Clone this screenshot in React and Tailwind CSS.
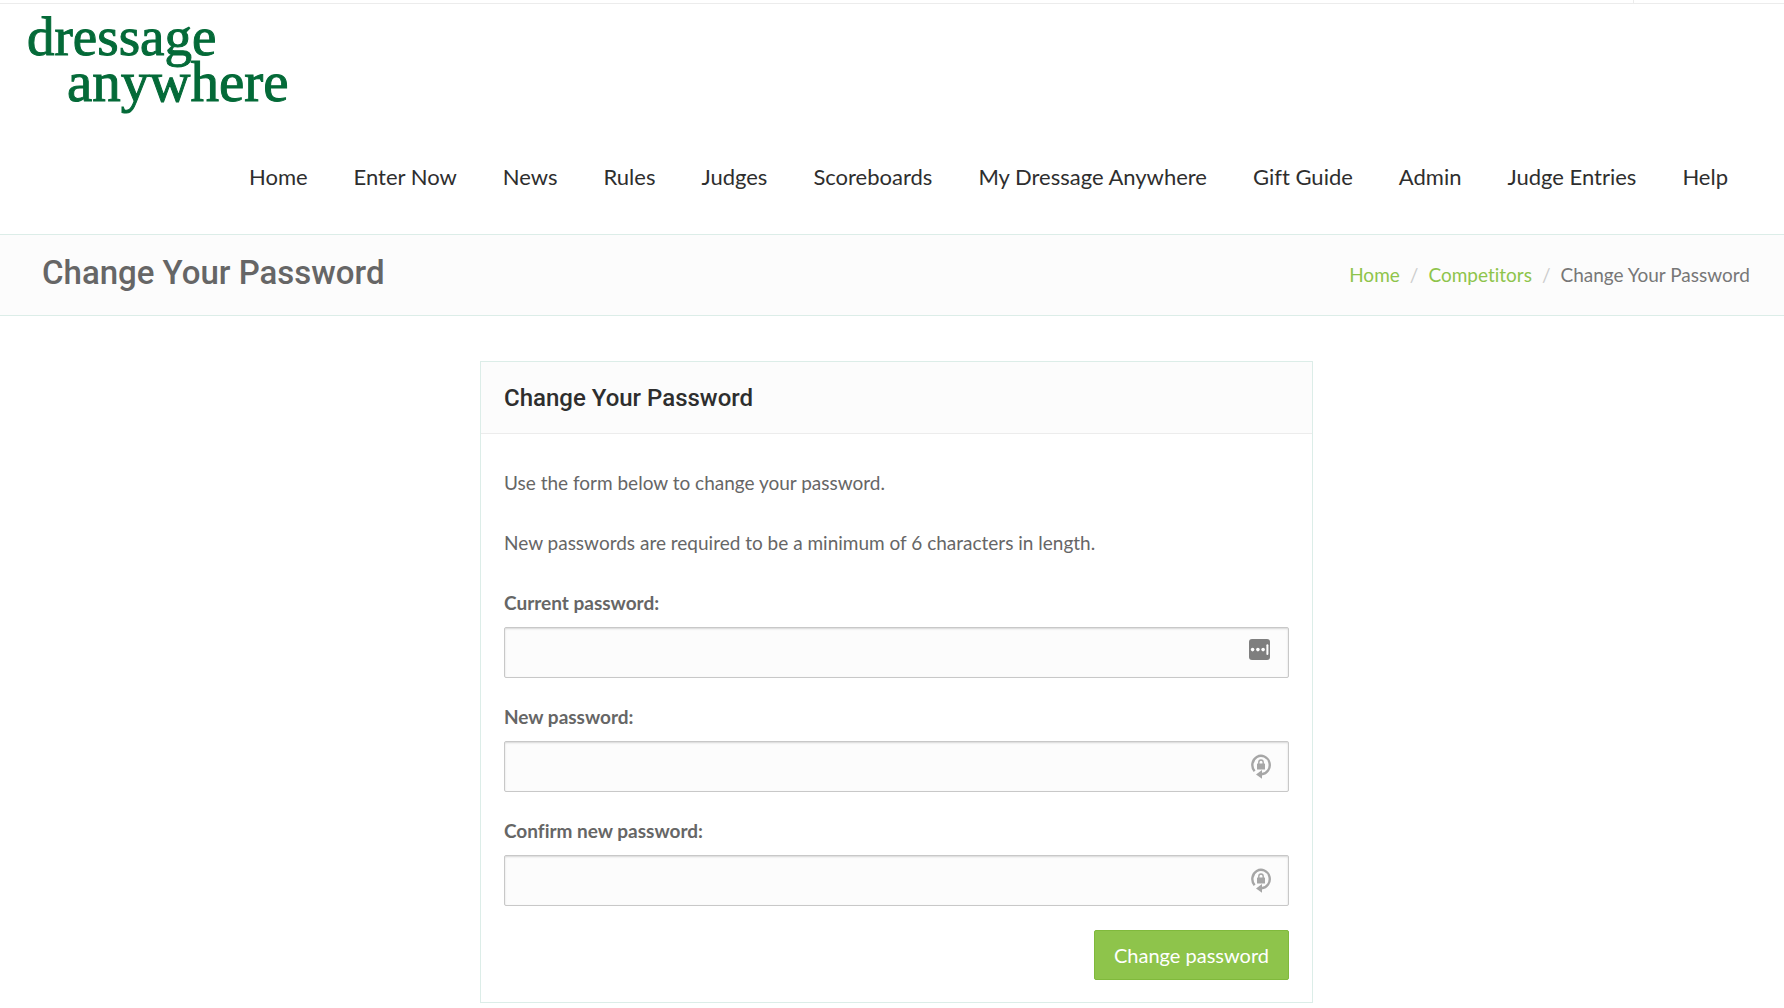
import { useState } from "react";

const navItems = [
  "Home",
  "Enter Now",
  "News",
  "Rules",
  "Judges",
  "Scoreboards",
  "My Dressage Anywhere",
  "Gift Guide",
  "Admin",
  "Judge Entries",
  "Help",
];

const fields = [
  { id: "current", label: "Current password:", icon: "saved" },
  { id: "new", label: "New password:", icon: "generate" },
  { id: "confirm", label: "Confirm new password:", icon: "generate" },
];

function SavedIcon() {
  return (
    <svg width="22" height="22" viewBox="0 0 22 22" aria-hidden="true">
      <rect x="0" y="0" width="21" height="21" rx="3" fill="#7f7f7f" />
      <circle cx="3.6" cy="10.6" r="1.8" fill="#fff" />
      <circle cx="8.9" cy="10.6" r="1.8" fill="#fff" />
      <circle cx="14.1" cy="10.6" r="1.8" fill="#fff" />
      <rect x="17.4" y="5.2" width="2" height="10.8" rx="1" fill="#fff" />
    </svg>
  );
}

function GenerateIcon() {
  return (
    <svg width="22" height="26" viewBox="-1 0 22 26" aria-hidden="true">
      <path
        d="M4.6 18.2 A8.7 9.2 0 1 1 11.5 21.2"
        fill="none"
        stroke="#a6a6a6"
        strokeWidth="2.4"
      />
      <path d="M6 21.4 L12 17 V25.8 Z" fill="#a6a6a6" />
      <rect x="7" y="10.6" width="8" height="6" rx="0.5" fill="#a6a6a6" />
      <path
        d="M8.8 11.2 V9.2 a2.2 2.2 0 0 1 4.4 0 V11.2"
        fill="none"
        stroke="#a6a6a6"
        strokeWidth="1.4"
      />
    </svg>
  );
}

function Header() {
  return (
    <header>
      <div className="flex h-1 justify-end border-b border-[#ececec]">
        <div className="w-[151px] border-l border-[#ececec]" />
      </div>
      <a
        href="#"
        aria-label="dressage anywhere"
        className="ml-[27px] mt-[10px] block w-fit font-['Liberation_Serif',serif] leading-[45px] text-[#046a38] [-webkit-text-stroke:1px_#046a38]"
      >
        <span className="block text-[55px]">dressage</span>
        <span className="block pl-10 text-[57px]">anywhere</span>
      </a>
      <nav className="mt-[53px] flex justify-end gap-[46px] pr-14 pb-[37px] text-[22px] leading-10 text-[#2e2e2e]">
        {navItems.map((item) => (
          <a key={item} href="#" className="whitespace-nowrap">
            {item}
          </a>
        ))}
      </nav>
    </header>
  );
}

function TitleBar() {
  return (
    <div className="flex h-[82px] items-center justify-between border-y border-[#dcede8] bg-[#fcfcfc] pl-[42px] pr-[34px]">
      <h1 className="pb-1 font-[Roboto,sans-serif] text-[33px] font-medium leading-10 text-[#666]">
        Change Your Password
      </h1>
      <ol className="flex gap-[10px] text-[19px] text-[#777]">
        <li>
          <a href="#" className="text-[#8ec44b]">
            Home
          </a>
        </li>
        <li className="text-[#ccc]">/</li>
        <li>
          <a href="#" className="text-[#8ec44b]">
            Competitors
          </a>
        </li>
        <li className="text-[#ccc]">/</li>
        <li>Change Your Password</li>
      </ol>
    </div>
  );
}

function PasswordField({ field, value, onChange }) {
  return (
    <div className="mb-6">
      <label htmlFor={field.id} className="block pb-[9px] font-bold leading-[30px]">
        {field.label}
      </label>
      <div className="relative">
        <input
          id={field.id}
          type="password"
          value={value}
          onChange={(e) => onChange(field.id, e.target.value)}
          className="block h-[51px] w-full rounded-xs border border-[#c8c8c8] bg-[#fcfcfc] px-3 pr-14 shadow-[inset_0_1px_2px_rgba(0,0,0,0.15)] outline-none"
        />
        <span className="pointer-events-none absolute top-3 right-[18px]">
          {field.icon === "saved" ? <SavedIcon /> : <GenerateIcon />}
        </span>
      </div>
    </div>
  );
}

export default function App() {
  const [values, setValues] = useState({ current: "", new: "", confirm: "" });

  const handleChange = (id, value) => {
    setValues({ ...values, [id]: value });
  };

  return (
    <div className="min-h-screen bg-white font-[Lato,sans-serif] text-[#666] [font-variant-ligatures:none]">
      <Header />
      <TitleBar />
      <main className="pt-[45px] pl-[43px] pr-[34px]">
        <section className="mx-auto w-full max-w-[833px] border border-[#dcede8]">
          <h2 className="border-b border-[#ececec] bg-[#fcfcfc] px-[23px] pt-4 pb-[15px] font-[Roboto,sans-serif] text-2xl/10 font-medium text-[#2e2e2e]">
            Change Your Password
          </h2>
          <form
            onSubmit={(e) => e.preventDefault()}
            className="px-[23px] pt-[34px] pb-[22px] text-[19px] leading-[30px]"
          >
            <p className="mb-[30px]">Use the form below to change your password.</p>
            <p className="mb-[30px]">
              New passwords are required to be a minimum of 6 characters in length.
            </p>
            {fields.map((field) => (
              <PasswordField
                key={field.id}
                field={field}
                value={values[field.id]}
                onChange={handleChange}
              />
            ))}
            <div className="flex justify-end">
              <button
                type="submit"
                className="h-[50px] rounded-xs border border-[#80b93c] bg-[#8ec44b] px-[19px] text-xl text-white"
              >
                Change password
              </button>
            </div>
          </form>
        </section>
      </main>
    </div>
  );
}
